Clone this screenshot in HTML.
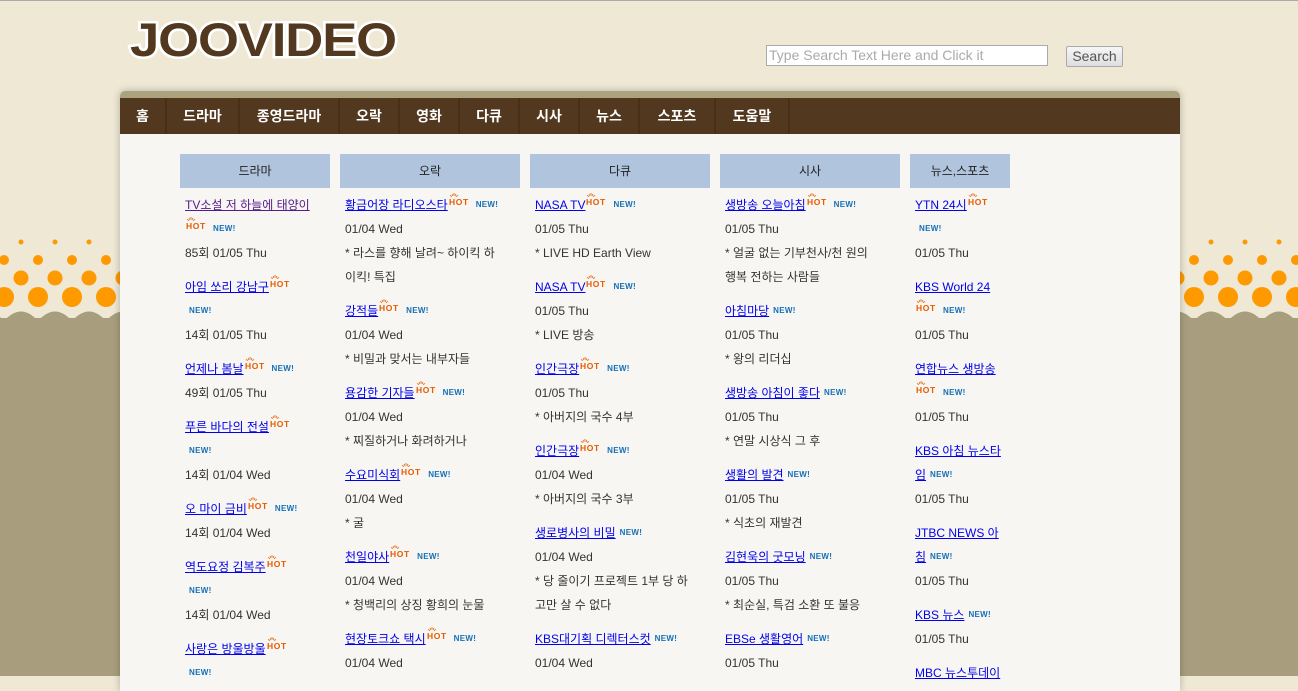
<!DOCTYPE html>
<html><head><meta charset="utf-8"><style>
*{margin:0;padding:0;box-sizing:border-box}
body{width:1298px;height:676px;overflow:hidden;background:#EEE8D4;font-family:"Liberation Sans","Noto Sans CJK KR",sans-serif;position:relative}
#tl{position:absolute;left:0;top:0;width:1298px;height:1px;background:#aaa}
#bg{position:absolute;left:0;top:230px;width:1298px;height:446px}
#logo{position:absolute;left:130px;top:12px;font-family:"Liberation Sans",sans-serif;font-weight:900;font-size:47px;color:#52381F;letter-spacing:-1px;-webkit-text-stroke:5px #fff;paint-order:stroke fill;transform:scaleX(1.12);transform-origin:left top;line-height:56px}
#q{position:absolute;left:766px;top:45px;width:282px;height:21px;border:1px solid #aaa;background:#fff;font-size:14px;color:#aaa;padding:1px 2px;line-height:17px}
#btn{position:absolute;left:1066px;top:46px;width:57px;height:21px;border:1px solid #aaa;border-radius:2px;background:linear-gradient(#f6f6f6,#dedede);font-size:14px;color:#555;text-align:center;line-height:19px}
#panel{position:absolute;left:120px;top:91px;width:1060px;height:600px;background:#F7F6F2;border-radius:5px 5px 0 0;box-shadow:0 0 8px rgba(0,0,0,.25)}
#cap{position:absolute;left:0;top:0;width:1060px;height:7px;background:#ADA27E;border-radius:5px 5px 0 0}
#nav{position:absolute;left:0;top:7px;width:1060px;height:36px;background:#52381F;display:flex}
#nav div{color:#fff;font-weight:bold;font-size:14px;line-height:36px;text-align:center;border-right:2px solid #46301a}
.h{position:absolute;top:154px;height:34px;background:#B0C4DE;font-size:12px;color:#222;text-align:center;line-height:34px}
.c{position:absolute;top:193px;font-size:12px;color:#333}
.l{height:24px;line-height:24px;white-space:nowrap;overflow:hidden}
.g{height:10px}
a{color:#00e;text-decoration:underline}
a.v{color:#551A8B}
.hot{display:inline-block;width:24px;height:14px;vertical-align:top;margin-top:0px}
.new{display:inline-block;font-size:8px;font-weight:900;color:#1470b8;margin-left:4px;letter-spacing:.3px;font-family:"Liberation Sans",sans-serif;line-height:24px;vertical-align:top}
</style></head><body>
<div id="tl"></div>
<svg id="bg" width="1298" height="446">
<defs><pattern id="p" x="4" y="0" width="34" height="446" patternUnits="userSpaceOnUse">
<circle cx="17" cy="12" r="2.5" fill="#FF9900"/>
<circle cx="0" cy="30" r="5" fill="#FF9900"/><circle cx="34" cy="30" r="5" fill="#FF9900"/>
<circle cx="17" cy="48" r="7.5" fill="#FF9900"/>
<circle cx="0" cy="67" r="10" fill="#FF9900"/><circle cx="34" cy="67" r="10" fill="#FF9900"/>
<path d="M0 91 Q17 72 34 91 L34 446 L0 446Z" fill="#A89E7E"/>
<rect x="0" y="88" width="34" height="358" fill="#A89E7E"/>
</pattern>
<symbol id="H" viewBox="0 0 24 14"><path d="M4 1l1 2M6 0v2.5M8 1l-1 2M2 2.5l2 1M10 2.5l-2 1" stroke="#e65c00" stroke-width="0.8"/><text x="1" y="12" font-family="Liberation Sans" font-weight="900" font-size="8.5" fill="#e65c00" letter-spacing="0.6">HOT</text></symbol>
</defs>
<rect width="1298" height="446" fill="url(#p)"/>
</svg>
<div id="logo">JOOVIDEO</div>
<div id="q">Type Search Text Here and Click it</div>
<div id="btn">Search</div>
<div id="panel"><div id="cap"></div>
<div id="nav"><div style="width:47px">홈</div><div style="width:73px">드라마</div><div style="width:100px">종영드라마</div><div style="width:60px">오락</div><div style="width:60px">영화</div><div style="width:60px">다큐</div><div style="width:60px">시사</div><div style="width:60px">뉴스</div><div style="width:76px">스포츠</div><div style="width:74px">도움말</div></div>
</div>
<div class="h" style="left:180px;width:150px">드라마</div>
<div class="h" style="left:340px;width:180px">오락</div>
<div class="h" style="left:530px;width:180px">다큐</div>
<div class="h" style="left:720px;width:180px">시사</div>
<div class="h" style="left:910px;width:100px">뉴스,스포츠</div>

<div class="c" style="left:185px">
<div class="l"><a class="v">TV소설 저 하늘에 태양이</a></div><div class="l"><svg class="hot"><use href="#H"/></svg><span class="new">NEW!</span></div><div class="l">85회 01/05 Thu</div><div class="g"></div>
<div class="l"><a>아임 쏘리 강남구</a><svg class="hot"><use href="#H"/></svg></div><div class="l"><span class="new">NEW!</span></div><div class="l">14회 01/05 Thu</div><div class="g"></div>
<div class="l"><a>언제나 봄날</a><svg class="hot"><use href="#H"/></svg><span class="new">NEW!</span></div><div class="l">49회 01/05 Thu</div><div class="g"></div>
<div class="l"><a>푸른 바다의 전설</a><svg class="hot"><use href="#H"/></svg></div><div class="l"><span class="new">NEW!</span></div><div class="l">14회 01/04 Wed</div><div class="g"></div>
<div class="l"><a>오 마이 금비</a><svg class="hot"><use href="#H"/></svg><span class="new">NEW!</span></div><div class="l">14회 01/04 Wed</div><div class="g"></div>
<div class="l"><a>역도요정 김복주</a><svg class="hot"><use href="#H"/></svg></div><div class="l"><span class="new">NEW!</span></div><div class="l">14회 01/04 Wed</div><div class="g"></div>
<div class="l"><a>사랑은 방울방울</a><svg class="hot"><use href="#H"/></svg></div><div class="l"><span class="new">NEW!</span></div>
</div>

<div class="c" style="left:345px">
<div class="l"><a>황금어장 라디오스타</a><svg class="hot"><use href="#H"/></svg><span class="new">NEW!</span></div><div class="l">01/04 Wed</div><div class="l">* 라스를 향해 날려~ 하이킥 하</div><div class="l">이킥! 특집</div><div class="g"></div>
<div class="l"><a>강적들</a><svg class="hot"><use href="#H"/></svg><span class="new">NEW!</span></div><div class="l">01/04 Wed</div><div class="l">* 비밀과 맞서는 내부자들</div><div class="g"></div>
<div class="l"><a>용감한 기자들</a><svg class="hot"><use href="#H"/></svg><span class="new">NEW!</span></div><div class="l">01/04 Wed</div><div class="l">* 찌질하거나 화려하거나</div><div class="g"></div>
<div class="l"><a>수요미식회</a><svg class="hot"><use href="#H"/></svg><span class="new">NEW!</span></div><div class="l">01/04 Wed</div><div class="l">* 굴</div><div class="g"></div>
<div class="l"><a>천일야사</a><svg class="hot"><use href="#H"/></svg><span class="new">NEW!</span></div><div class="l">01/04 Wed</div><div class="l">* 청백리의 상징 황희의 눈물</div><div class="g"></div>
<div class="l"><a>현장토크쇼 택시</a><svg class="hot"><use href="#H"/></svg><span class="new">NEW!</span></div><div class="l">01/04 Wed</div>
</div>

<div class="c" style="left:535px">
<div class="l"><a>NASA TV</a><svg class="hot"><use href="#H"/></svg><span class="new">NEW!</span></div><div class="l">01/05 Thu</div><div class="l">* LIVE HD Earth View</div><div class="g"></div>
<div class="l"><a>NASA TV</a><svg class="hot"><use href="#H"/></svg><span class="new">NEW!</span></div><div class="l">01/05 Thu</div><div class="l">* LIVE 방송</div><div class="g"></div>
<div class="l"><a>인간극장</a><svg class="hot"><use href="#H"/></svg><span class="new">NEW!</span></div><div class="l">01/05 Thu</div><div class="l">* 아버지의 국수 4부</div><div class="g"></div>
<div class="l"><a>인간극장</a><svg class="hot"><use href="#H"/></svg><span class="new">NEW!</span></div><div class="l">01/04 Wed</div><div class="l">* 아버지의 국수 3부</div><div class="g"></div>
<div class="l"><a>생로병사의 비밀</a><span class="new">NEW!</span></div><div class="l">01/04 Wed</div><div class="l">* 당 줄이기 프로젝트 1부 당 하</div><div class="l">고만 살 수 없다</div><div class="g"></div>
<div class="l"><a>KBS대기획 디렉터스컷</a><span class="new">NEW!</span></div><div class="l">01/04 Wed</div>
</div>

<div class="c" style="left:725px">
<div class="l"><a>생방송 오늘아침</a><svg class="hot"><use href="#H"/></svg><span class="new">NEW!</span></div><div class="l">01/05 Thu</div><div class="l">* 얼굴 없는 기부천사/천 원의</div><div class="l">행복 전하는 사람들</div><div class="g"></div>
<div class="l"><a>아침마당</a><span class="new">NEW!</span></div><div class="l">01/05 Thu</div><div class="l">* 왕의 리더십</div><div class="g"></div>
<div class="l"><a>생방송 아침이 좋다</a><span class="new">NEW!</span></div><div class="l">01/05 Thu</div><div class="l">* 연말 시상식 그 후</div><div class="g"></div>
<div class="l"><a>생활의 발견</a><span class="new">NEW!</span></div><div class="l">01/05 Thu</div><div class="l">* 식초의 재발견</div><div class="g"></div>
<div class="l"><a>김현욱의 굿모닝</a><span class="new">NEW!</span></div><div class="l">01/05 Thu</div><div class="l">* 최순실, 특검 소환 또 불응</div><div class="g"></div>
<div class="l"><a>EBSe 생활영어</a><span class="new">NEW!</span></div><div class="l">01/05 Thu</div>
</div>

<div class="c" style="left:915px">
<div class="l"><a>YTN 24시</a><svg class="hot"><use href="#H"/></svg></div><div class="l"><span class="new">NEW!</span></div><div class="l">01/05 Thu</div><div class="g"></div>
<div class="l"><a>KBS World 24</a></div><div class="l"><svg class="hot"><use href="#H"/></svg><span class="new">NEW!</span></div><div class="l">01/05 Thu</div><div class="g"></div>
<div class="l"><a>연합뉴스 생방송</a></div><div class="l"><svg class="hot"><use href="#H"/></svg><span class="new">NEW!</span></div><div class="l">01/05 Thu</div><div class="g"></div>
<div class="l"><a>KBS 아침 뉴스타</a></div><div class="l"><a>임</a><span class="new">NEW!</span></div><div class="l">01/05 Thu</div><div class="g"></div>
<div class="l"><a>JTBC NEWS 아</a></div><div class="l"><a>침</a><span class="new">NEW!</span></div><div class="l">01/05 Thu</div><div class="g"></div>
<div class="l"><a>KBS 뉴스</a><span class="new">NEW!</span></div><div class="l">01/05 Thu</div><div class="g"></div>
<div class="l"><a>MBC 뉴스투데이</a></div>
</div>
</body></html>
